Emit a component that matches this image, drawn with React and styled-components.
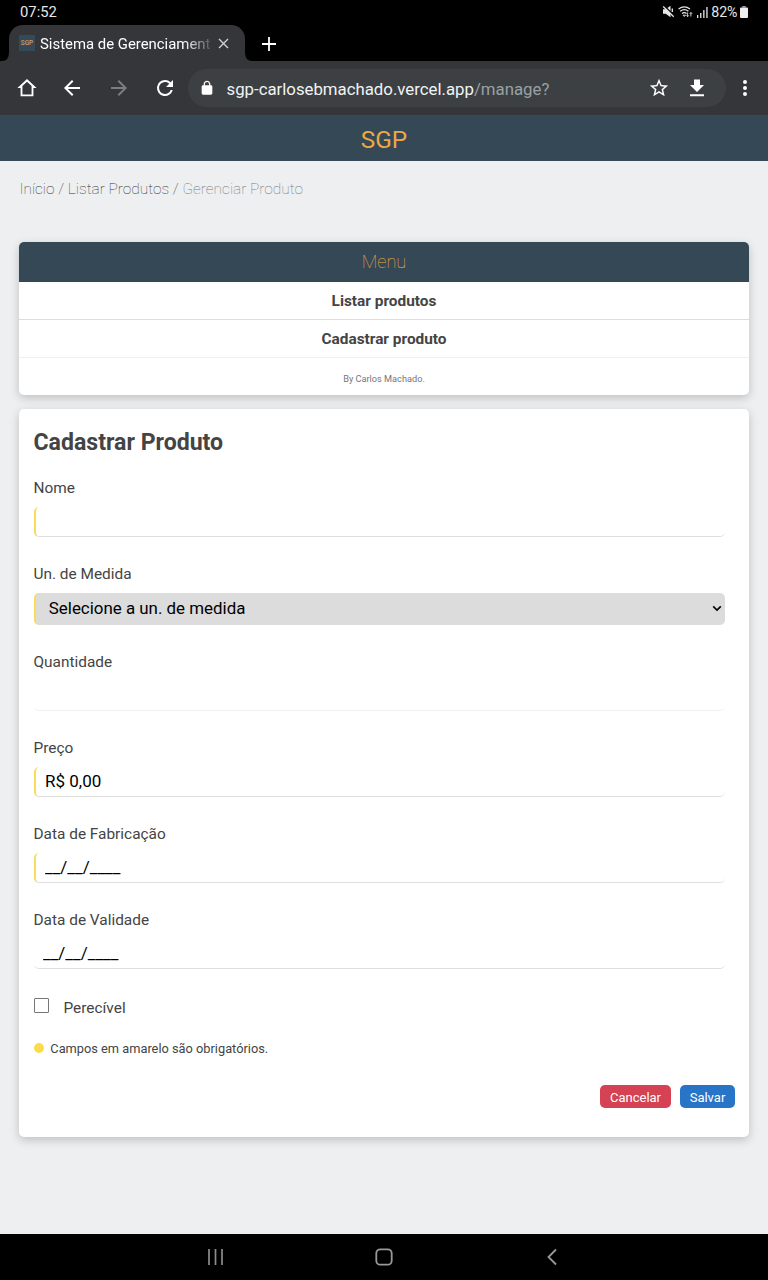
import React from "react";
import styled, { createGlobalStyle } from "styled-components";

const Global = createGlobalStyle`
  * { box-sizing: border-box; }
  body { margin: 0; background: #edeff1; font-family: Roboto, sans-serif; color: #444; }
  svg { display: block; flex: none; }
`;

const Screen = styled.div`
  width: 768px;
  height: 1280px;
  display: flex;
  flex-direction: column;
  overflow: hidden;
`;

/* ---- system and browser bars ---- */
const StatusBar = styled.div`
  height: 25px;
  flex: none;
  background: #000;
  color: #e6e6e6;
  display: flex;
  align-items: center;
  justify-content: space-between;
  padding: 0 20px 2px;
  font-size: 14.8px;
`;
const StatusIcons = styled.div`
  display: flex;
  align-items: center;
  gap: 3.5px;
  font-size: 14.2px;
`;
const Battery = styled.span`
  display: flex;
  align-items: center;
  gap: 2.5px;
`;
const TabStrip = styled.div`
  height: 36px;
  flex: none;
  background: #000;
  display: flex;
  align-items: center;
  color: #fff;
`;
const TabFoot = styled.svg`
  align-self: flex-end;
`;
const Tab = styled.div`
  width: 236px;
  height: 36px;
  background: #35363a;
  border-radius: 14px 14px 0 0;
  display: flex;
  align-items: center;
  padding: 0 16px 0 10px;
`;
const Favicon = styled.span`
  width: 16px;
  height: 16px;
  background: #354a58;
  color: #c9a067;
  font-size: 6.5px;
  font-weight: 500;
  line-height: 17px;
  text-align: center;
`;
const TabTitle = styled.span`
  width: 171px;
  margin-left: 5px;
  margin-right: 7px;
  padding-top: 1px;
  font-size: 14.9px;
  white-space: nowrap;
  mask-image: linear-gradient(to right, #000 84%, rgba(0, 0, 0, 0.15) 100%);
`;
const NewTab = styled.span`
  margin-left: 8px;
  padding-top: 2px;
`;
const Toolbar = styled.div`
  height: 54px;
  flex: none;
  background: #35363a;
  display: flex;
  align-items: center;
  padding: 0.5px 10px 0 16.3px;
`;
const NavIcons = styled.div`
  width: 171.7px;
  display: flex;
  align-items: center;
  gap: 22.2px;
`;
const AddressBar = styled.div`
  width: 538.5px;
  height: 38px;
  border-radius: 19px;
  background: #3c4043;
  display: flex;
  align-items: center;
  padding: 0 17px 0 11px;
`;
const Url = styled.span`
  flex: 1;
  margin-left: 11.5px;
  padding-top: 1px;
  font-size: 16.8px;
  color: #f1f3f4;
  white-space: nowrap;
`;
const UrlPath = styled.span`
  color: #9aa0a6;
`;
const AddressActions = styled.div`
  display: flex;
  align-items: center;
  gap: 15.5px;
`;
const MenuDots = styled.span`
  margin-left: 6.7px;
`;

/* ---- page ---- */
const Header = styled.header`
  height: 46px;
  flex: none;
  background: #354856;
  color: #eba945;
  font-size: 24.4px;
  line-height: 50px;
  text-align: center;
`;
const Page = styled.main`
  flex: 1;
  background: #edeff1;
  padding: 18px 19px 0;
`;
const Breadcrumb = styled.nav`
  height: 63px;
  font-size: 15.45px;
  line-height: 21px;
  font-weight: 100;
  color: #333;
  padding-left: 0.5px;
`;
const Current = styled.span`
  color: #777;
`;
const Card = styled.section`
  background: #fff;
  border-radius: 5px;
  box-shadow: 0 3px 10px rgba(0, 0, 0, 0.2);
`;
const MenuCard = styled(Card)`
  height: 153.3px;
  margin-bottom: 14px;
  text-align: center;
`;
const MenuTitle = styled.div`
  height: 40px;
  border-radius: 5px 5px 0 0;
  background: #354856;
  color: #eba945;
  font-size: 18.2px;
  font-weight: 100;
  line-height: 40px;
`;
const MenuItem = styled.div`
  height: 38px;
  line-height: 38px;
  border-bottom: 1px solid ${(p) => p.$line};
  color: #444;
  font-size: 15.4px;
  font-weight: 700;
`;
const MenuFooter = styled.div`
  font-size: 9.2px;
  line-height: 41.5px;
  color: #777;
`;
const FormCard = styled(Card)`
  height: 727.5px;
  padding: 17.7px 14px 0 14.5px;
`;
const Title = styled.h1`
  margin: 0 0 22.5px;
  height: 30px;
  font-size: 23.1px;
  line-height: 31px;
  font-weight: 700;
  color: #444;
`;
const Field = styled.div`
  width: 691px;
  margin-bottom: 28px;
`;
const Label = styled.label`
  display: block;
  height: 20px;
  line-height: 19.5px;
  margin-bottom: 8px;
  font-size: 15.4px;
  color: #444;
`;
const Input = styled.input`
  display: block;
  width: 100%;
  height: 30px;
  margin: 0;
  padding: 0 9.5px;
  border: 0;
  border-bottom: 1px solid ${(p) => (p.$faint ? "#efefef" : "#ddd")};
  border-left: ${(p) => (p.$required ? "2px solid #f9dc5c" : "0")};
  border-radius: 5px;
  background: transparent;
  color: #000;
  font: 17px Roboto, sans-serif;
  outline: 0;
`;
const Select = styled.div`
  height: 31.5px;
  display: flex;
  align-items: center;
  justify-content: space-between;
  padding: 0 3px 2px 13.3px;
  border-left: 2px solid #f9dc5c;
  border-radius: 5px;
  background: #dcdcdc;
  color: #000;
  font-size: 16.9px;
`;
const CheckRow = styled.label`
  display: flex;
  height: 20px;
  margin-top: 29px;
  margin-bottom: 20.5px;
  font-size: 15.4px;
  line-height: 21px;
`;
const Box = styled.span`
  width: 15px;
  height: 15px;
  margin-right: 15px;
  border: 1px solid #767676;
  border-radius: 1px;
`;
const Note = styled.div`
  display: flex;
  align-items: center;
  height: 20px;
  font-size: 12.8px;
  line-height: 20px;
  padding-top: 1px;
`;
const Dot = styled.span`
  width: 10.5px;
  height: 10.5px;
  margin: 0 6.3px 2px 0;
  border-radius: 50%;
  background: #fadc4d;
`;
const Actions = styled.div`
  display: flex;
  justify-content: flex-end;
  gap: 9px;
  margin-top: 26.5px;
`;
const Button = styled.button`
  width: ${(p) => p.$w}px;
  height: 23px;
  padding: 2px 0 0;
  border: 0;
  border-radius: 5px;
  background: ${(p) => p.$bg};
  color: #fff;
  font: 13px Roboto, sans-serif;
`;
const SystemNav = styled.footer`
  height: 46px;
  flex: none;
  background: #000;
  display: flex;
  align-items: center;
  justify-content: center;
  gap: 148px;
`;

const Glyph = ({ size = 24, d, fill = "#fff" }) => (
  <svg width={size} height={size} viewBox="0 0 24 24" fill={fill}>
    <path d={d} />
  </svg>
);

function StatusGroup() {
  return (
    <StatusIcons>
      <svg width="13" height="13" viewBox="0 0 13 13">
        <path d="M1 4.200h2.700L8.500.8v11.400L3.700 8.800H1z" fill="#e6e6e6" />
        <path d="M2.200.8l11 11" stroke="#000" strokeWidth="1.500" />
        <path d="M1.200 1.500l10.500 10.200M10.300 3.500v3.500" stroke="#e6e6e6" strokeWidth="1.300" />
      </svg>
      <svg width="15" height="13" viewBox="0 0 15 13" fill="none" stroke="#e6e6e6" strokeWidth="1.200">
        <path d="M.6 4q5.600-4.400 11.400 0M2.200 6.300q4.100-3.200 8.200 0M4 8.500q2.300-1.800 4.600 0" />
        <path d="M5 10.200h2.600L6.300 11.500zM9.600 7.500v4M8.400 10.400l1.200 1.300 1.200-1.300M12.900 11.500v-4M11.700 8.800l1.200-1.300 1.200 1.300" strokeWidth=".9" />
      </svg>
      <svg width="11" height="12" viewBox="0 0 11 12" fill="#e6e6e6">
        <path d="M0 9h1.300v3H0zM3.100 7h1.300v5H3.100zM6.200 4h1.300v8H6.200zM9.300 1h1.300v11H9.300z" />
      </svg>
      <Battery>
        82%
        <svg width="8" height="12" viewBox="0 0 8 12">
          <path d="M2.200 0h3.600v1.500H2.200z" fill="#999" />
          <rect y="1.500" width="8" height="10.500" rx="1" fill="#eee" />
        </svg>
      </Battery>
    </StatusIcons>
  );
}

export default function App() {
  return (
    <Screen>
      <Global />
      <StatusBar>
        <span>07:52</span>
        <StatusGroup />
      </StatusBar>
      <TabStrip>
        <TabFoot width="9" height="9" viewBox="0 0 9 9"><path d="M9 0v9H2q7 0 7-9z" fill="#35363a" /></TabFoot>
        <Tab>
          <Favicon>SGP</Favicon>
          <TabTitle>Sistema de Gerenciament</TabTitle>
          <svg width="11" height="11" viewBox="0 0 11 11" stroke="#d0d1d3" strokeWidth="1.400"><path d="M1 1l9 9M10 1l-9 9" /></svg>
        </Tab>
        <TabFoot width="9" height="9" viewBox="0 0 9 9"><path d="M0 0v9h7Q0 9 0 0z" fill="#35363a" /></TabFoot>
        <NewTab>
          <svg width="14" height="14" viewBox="0 0 14 14" stroke="#fff" strokeWidth="1.800"><path d="M7 0v14M0 7h14" /></svg>
        </NewTab>
      </TabStrip>
      <Toolbar>
        <NavIcons>
          <Glyph size={22} d="M12 2.200L1.500 12H5v9h14v-9h3.500zm0 2.900l5 4.800V19H7V9.900z" />
          <Glyph d="M20 11H7.830l5.590-5.590L12 4l-8 8 8 8 1.410-1.410L7.830 13H20v-2z" />
          <Glyph fill="#7c7d80" d="M12 4l-1.410 1.410L16.170 11H4v2h12.170l-5.580 5.590L12 20l8-8z" />
          <Glyph d="M17.650 6.350A7.958 7.958 0 0 0 12 4a8 8 0 1 0 7.730 10h-2.080A6 6 0 1 1 12 6c1.660 0 3.140.69 4.220 1.780L13 11h7V4z" />
        </NavIcons>
        <AddressBar>
          <Glyph size={16} d="M18 8h-1V6c0-2.760-2.240-5-5-5S7 3.240 7 6v2H6c-1.100 0-2 .9-2 2v10c0 1.100.9 2 2 2h12c1.100 0 2-.9 2-2V10c0-1.100-.9-2-2-2zM8.900 8V6a3.100 3.100 0 0 1 6.200 0v2z" />
          <Url>sgp-carlosebmachado.vercel.app<UrlPath>/manage?</UrlPath></Url>
          <AddressActions>
            <Glyph size={22} d="M22 9.240l-7.190-.62L12 2 9.190 8.630 2 9.240l5.460 4.730L5.820 21 12 17.270 18.180 21l-1.630-7.030L22 9.240zM12 15.400l-3.760 2.270 1-4.280-3.320-2.880 4.380-.38L12 6.100l1.710 4.040 4.380.38-3.320 2.880 1 4.280L12 15.400z" />
            <Glyph d="M19 9h-4V3.500H9V9H5l7 7 7-7zM5 18.300v2h14v-2H5z" />
          </AddressActions>
        </AddressBar>
        <MenuDots>
          <Glyph d="M12 8a2 2 0 1 0 0-4 2 2 0 0 0 0 4zm0 2a2 2 0 1 0 0 4 2 2 0 0 0 0-4zm0 6a2 2 0 1 0 0 4 2 2 0 0 0 0-4z" />
        </MenuDots>
      </Toolbar>

      <Header>SGP</Header>
      <Page>
        <Breadcrumb>Início / Listar Produtos / <Current>Gerenciar Produto</Current></Breadcrumb>
        <MenuCard>
          <MenuTitle>Menu</MenuTitle>
          <MenuItem $line="#ddd">Listar produtos</MenuItem>
          <MenuItem $line="#efefef">Cadastrar produto</MenuItem>
          <MenuFooter>By Carlos Machado.</MenuFooter>
        </MenuCard>
        <FormCard>
          <Title>Cadastrar Produto</Title>
          <Field>
            <Label>Nome</Label>
            <Input $required />
          </Field>
          <Field>
            <Label>Un. de Medida</Label>
            <Select>
              Selecione a un. de medida
              <svg width="10" height="7" viewBox="0 0 10 7" fill="none" stroke="#000" strokeWidth="1.600"><path d="M1.200 1.400L5 5.100l3.800-3.700" /></svg>
            </Select>
          </Field>
          <Field>
            <Label>Quantidade</Label>
            <Input $faint />
          </Field>
          <Field>
            <Label>Preço</Label>
            <Input $required defaultValue="R$ 0,00" />
          </Field>
          <Field>
            <Label>Data de Fabricação</Label>
            <Input $required defaultValue="__/__/____" />
          </Field>
          <Field>
            <Label>Data de Validade</Label>
            <Input defaultValue="__/__/____" />
          </Field>
          <CheckRow><Box />Perecível</CheckRow>
          <Note><Dot />Campos em amarelo são obrigatórios.</Note>
          <Actions>
            <Button $w={71} $bg="#d44253">Cancelar</Button>
            <Button $w={55} $bg="#2874c7">Salvar</Button>
          </Actions>
        </FormCard>
      </Page>
      <SystemNav>
        <svg width="20" height="18" viewBox="0 0 20 18" stroke="#8c8c8c" strokeWidth="1.700"><path d="M3 1v16M9.500 1v16M16 1v16" /></svg>
        <svg width="20" height="18" viewBox="0 0 20 18" fill="none" stroke="#999" strokeWidth="1.800"><rect x="2.300" y="1.300" width="15.400" height="15.400" rx="4" /></svg>
        <svg width="20" height="18" viewBox="0 0 20 18" fill="none" stroke="#999" strokeWidth="1.800"><path d="M14 1.500L6.500 9l7.500 7.500" /></svg>
      </SystemNav>
    </Screen>
  );
}
